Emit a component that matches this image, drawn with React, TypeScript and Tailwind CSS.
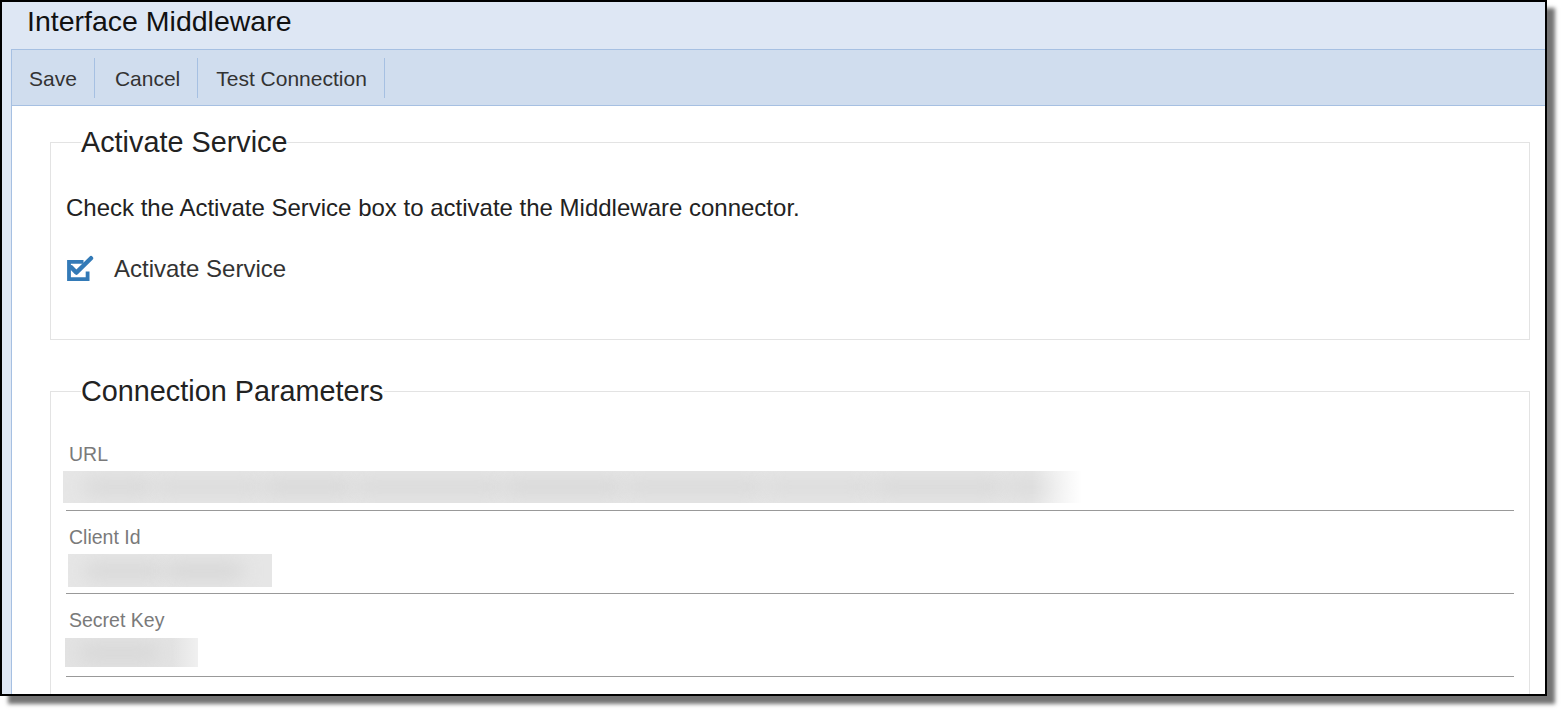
import React from "react";

const font = { fontFamily: '"Liberation Sans", Arial, sans-serif' };

function CheckIcon() {
  return (
    <svg width="28" height="28" viewBox="0 0 28 28" className="shrink-0">
      <path
        d="M17.5 6.8 H3 V24.2 H21.6 V16.5"
        fill="none"
        stroke="#337ab7"
        strokeWidth="3.8"
        strokeLinejoin="miter"
      />
      <path
        d="M5.4 12.4 L10.3 17.6 L25 3.2"
        fill="none"
        stroke="#337ab7"
        strokeWidth="4.4"
        strokeLinecap="round"
        strokeLinejoin="round"
      />
    </svg>
  );
}

function Blob({ cls }: { cls: string }) {
  return <span className={cls} />;
}

export default function App() {
  return (
    <div className="w-[1561px] h-[711px] bg-white overflow-hidden" style={font}>
      <div className="w-[1547px] h-[696px] border-2 border-black bg-[#dee7f4] shadow-[8px_8px_4px_rgba(0,0,0,0.55)] overflow-hidden flex flex-col">
        {/* Header */}
        <div className="h-[47px] shrink-0 pt-[2px] pl-[25px] text-[28.5px] leading-[35px] text-[#111]">
          Interface Middleware
        </div>

        <div className="ml-[9px] border-l border-[#a6c0e2] flex-1 flex flex-col min-h-0">
          {/* Toolbar */}
          <div className="h-[57px] shrink-0 bg-[#d0ddee] border-t border-b border-[#a6c0e2] flex items-start text-[21px] text-[#333]">
            <div className="mt-[8px] h-[40px] flex items-center pt-[1px] px-[17px] border-r border-[#a6c0e2]">Save</div>
            <div className="mt-[8px] h-[40px] flex items-center pt-[1px] pl-[20px] pr-[17px] border-r border-[#a6c0e2]">Cancel</div>
            <div className="mt-[8px] h-[40px] flex items-center pt-[1px] pl-[18px] pr-[17px] border-r border-[#a6c0e2]">Test Connection</div>
          </div>

          {/* Content */}
          <div className="flex-1 bg-white pl-[38px] pr-[15px] pt-[19px] overflow-hidden">
            <fieldset className="border border-[#e3e3e3] px-[15px] pb-[56px]">
              <legend className="ml-[15px] px-0 text-[28.8px] leading-[34px] text-[#222]">Activate Service</legend>
              <p className="mt-[35px] text-[24px] leading-[28px] text-[#222]">
                Check the Activate Service box to activate the Middleware connector.
              </p>
              <div className="mt-[33px] h-[28px] flex items-center gap-[20px]">
                <CheckIcon />
                <span className="text-[24px] leading-[28px] text-[#333]">Activate Service</span>
              </div>
            </fieldset>

            <fieldset className="mt-[34px] border border-[#e3e3e3] px-[15px] pt-[20px] pb-[40px]">
              <legend className="ml-[15px] px-0 text-[28.8px] leading-[34px] text-[#222]">Connection Parameters</legend>

              {/* URL */}
              <div className="pt-[14px] border-b border-[#999]">
                <div className="pl-[3px] h-[24px] text-[19.5px] leading-[24px] text-[#7a7a7a]">URL</div>
                <div className="h-[44px] pt-[5px]">
                  <div className="relative -ml-[3px] w-[1019px] h-[32px] bg-[#e6e6e6] overflow-hidden flex items-center pl-[20px]">
                    <Blob cls="h-[18px] w-[70px] rounded-full bg-[#d9d9d9] blur-[9px]" />
                    <Blob cls="h-[18px] w-[110px] rounded-full bg-[#dbdbdb] blur-[9px]" />
                    <Blob cls="h-[18px] w-[90px] rounded-full bg-[#d8d8d8] blur-[9px]" />
                    <Blob cls="h-[18px] w-[150px] rounded-full bg-[#dadada] blur-[9px]" />
                    <Blob cls="h-[18px] w-[120px] rounded-full bg-[#d8d8d8] blur-[9px]" />
                    <Blob cls="h-[18px] w-[140px] rounded-full bg-[#dadada] blur-[9px]" />
                    <Blob cls="h-[18px] w-[110px] rounded-full bg-[#dcdcdc] blur-[9px]" />
                    <Blob cls="h-[18px] w-[130px] rounded-full bg-[#d9d9d9] blur-[9px]" />
                    <Blob cls="h-[18px] w-[60px] rounded-full bg-[#dbdbdb] blur-[9px]" />
                    <div className="absolute right-0 top-0 h-full w-[50px] bg-linear-to-r from-[#e6e6e6]/0 to-white" />
                  </div>
                </div>
              </div>

              {/* Client Id */}
              <div className="pt-[14px] border-b border-[#999]">
                <div className="pl-[3px] h-[24px] text-[19.5px] leading-[24px] text-[#7a7a7a]">Client Id</div>
                <div className="h-[44px] pt-[5px]">
                  <div className="ml-[2px] w-[204px] h-[33px] bg-[#e6e6e6] overflow-hidden flex items-center pl-[16px]">
                    <Blob cls="h-[18px] w-[80px] rounded-full bg-[#d8d8d8] blur-[9px]" />
                    <Blob cls="h-[18px] w-[80px] rounded-full bg-[#d7d7d7] blur-[9px]" />
                  </div>
                </div>
              </div>

              {/* Secret Key */}
              <div className="pt-[14px] border-b border-[#999]">
                <div className="pl-[3px] h-[24px] text-[19.5px] leading-[24px] text-[#7a7a7a]">Secret Key</div>
                <div className="h-[44px] pt-[6px]">
                  <div className="relative -ml-[1px] w-[133px] h-[29px] bg-[#e3e3e3] overflow-hidden flex items-center pl-[14px]">
                    <Blob cls="h-[16px] w-[80px] rounded-full bg-[#d6d6d6] blur-[9px]" />
                    <div className="absolute right-0 top-0 h-full w-[25px] bg-linear-to-r from-[#e3e3e3]/0 to-[#f0f0f0]" />
                  </div>
                </div>
              </div>
            </fieldset>
          </div>
        </div>
      </div>
    </div>
  );
}
